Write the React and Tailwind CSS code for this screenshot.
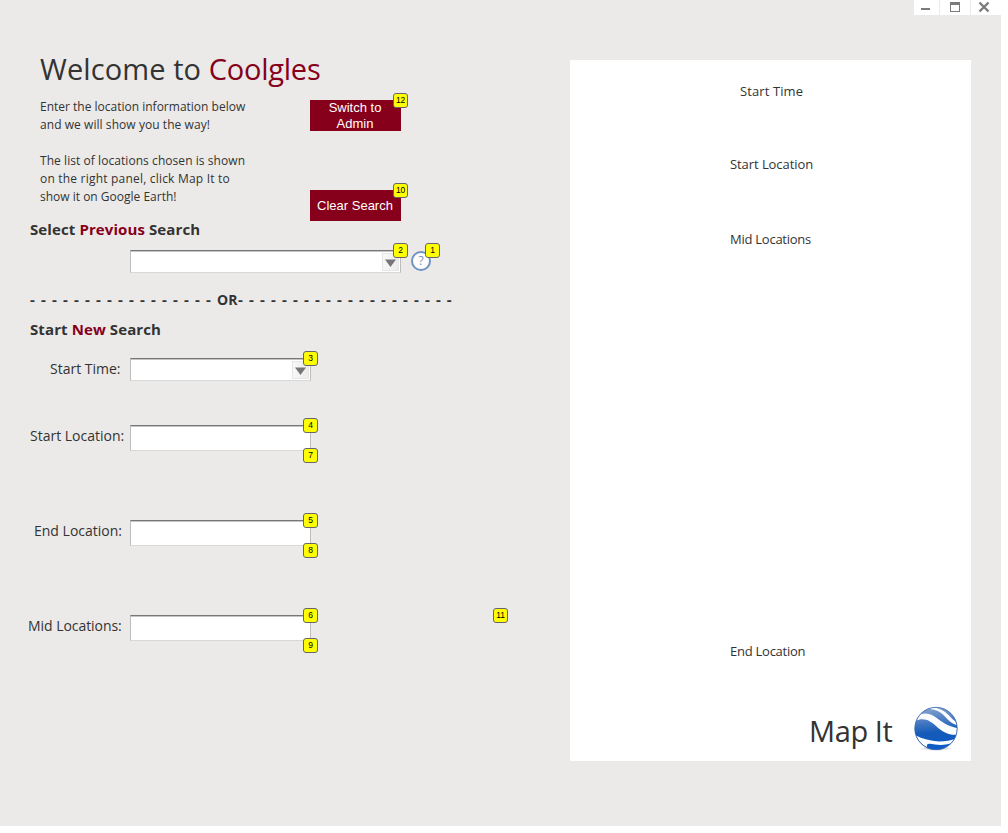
const DASHES_LEFT = Array(17).fill('-').join(' ');
const DASHES_RIGHT = Array(20).fill('-').join(' ');

function Badge({ n, className }) {
  return (
    <span
      className={`absolute z-10 flex h-[15px] w-[15px] items-center justify-center rounded-[3px] border border-[#666] bg-[#ffff00] font-['Liberation_Sans',sans-serif] text-[8.5px] leading-none tracking-[-0.2px] text-black ${className}`}
    >
      {n}
    </span>
  );
}

function Arrow() {
  return (
    <span className="mt-[2px] mr-px flex h-[18px] w-[17px] items-center justify-center border border-[#e6e6e6] bg-linear-to-r from-[#f8f8f8] to-[#ececec]">
      <svg className="mt-px h-[8px] w-[11px]" viewBox="0 0 11 8">
        <path d="M0 0.5h11L5.5 8z" fill="#777" />
      </svg>
    </span>
  );
}

function Field({ select, wide, children }) {
  return (
    <div
      className={`relative flex shrink-0 justify-end border border-[#bdbdbd] border-t-[#777] border-b-[#d8d8d8] bg-white shadow-[inset_0_1px_0_#c4c4c4] ${
        wide ? 'w-[271px]' : 'w-[181px]'
      } ${select ? 'h-[23px]' : 'h-[26px]'}`}
    >
      {select && <Arrow />}
      {children}
    </div>
  );
}

function Label({ className, children }) {
  return <label className={`w-[130px] shrink-0 text-[14px] leading-[22px] whitespace-nowrap ${className}`}>{children}</label>;
}

function Button({ badge, children }) {
  return (
    <button className="relative flex h-[31px] w-[91px] shrink-0 items-center justify-center bg-[#86001b] pr-px font-['Liberation_Sans',sans-serif] text-[13px] leading-4 text-white">
      {children}
      <Badge n={badge} className="-top-[7px] left-[83px]" />
    </button>
  );
}

function Earth() {
  return (
    <svg className="h-[46px] w-[46px]" viewBox="0 0 46 46">
      <defs>
        <linearGradient id="sea" x1="0.3" y1="0" x2="0.4" y2="1">
          <stop offset="0" stopColor="#8aa5cf" />
          <stop offset="0.3" stopColor="#4f7fc4" />
          <stop offset="0.6" stopColor="#155ab8" />
          <stop offset="1" stopColor="#0c5cc8" />
        </linearGradient>
        <radialGradient id="shade">
          <stop offset="0" stopColor="#777" stopOpacity="0.6" />
          <stop offset="1" stopColor="#777" stopOpacity="0" />
        </radialGradient>
        <clipPath id="globe">
          <circle cx="23" cy="23.5" r="21" />
        </clipPath>
      </defs>
      <ellipse cx="23" cy="43.5" rx="17" ry="2.5" fill="url(#shade)" />
      <circle cx="23" cy="23.5" r="21.3" fill="url(#sea)" />
      <g clipPath="url(#globe)" fill="#fbfdff">
        <path d="M4 12C9 6.500 17 8 23 12.500C30 18 36 21.500 46 23.500V29.500C37 31 30 27.500 23 21C17 15.500 11 12 2 16z" />
        <path d="M19 2C26 3 31 5.500 35 9.500C38.500 13 41 16 45 18V20.500C39 19 35.500 15.500 32 11.500C28 7 23 4.500 17 4z" />
        <path d="M1 29.500C9 34 17 36 26 36.500C33 36.500 38 35.500 45 33L41 37.500C33 40.500 25 40.500 17 38.800C14.500 38.500 13.500 39.500 14 42.500C8 39 4 35 1 29.500z" />
      </g>
      <circle cx="23" cy="23.5" r="21.2" fill="none" stroke="#3865ac" strokeWidth="0.8" />
    </svg>
  );
}

function WindowControls() {
  return (
    <div className="flex h-[15px] w-[87px] shrink-0 gap-px self-end">
      <span className="flex w-[25px] bg-white">
        <svg className="h-[15px] w-[25px]" viewBox="0 0 25 15">
          <path d="M7 8h9v2H7z" fill="#7b7b7b" />
        </svg>
      </span>
      <span className="flex w-[30px] bg-white">
        <svg className="h-[15px] w-[30px]" viewBox="0 0 30 15">
          <path d="M10 2h10v10H10zM11 5v6h8V5z" fill="#7b7b7b" fillRule="evenodd" />
        </svg>
      </span>
      <span className="flex w-[30px] bg-white">
        <svg className="h-[15px] w-[30px]" viewBox="0 0 30 15">
          <path d="M8.500 2.500l9 9M17.500 2.500l-9 9" stroke="#7b7b7b" strokeWidth="2.400" />
        </svg>
      </span>
    </div>
  );
}

export default function App() {
  return (
    <div className="min-h-[833px] bg-white font-['Open_Sans',sans-serif] text-[#333]">
      <div className="flex h-[826px] w-[1001px] flex-col bg-[#ebeae8]">
        <WindowControls />
        <div className="flex">
          <main className="flex w-[570px] shrink-0 flex-col pt-[33px]">
            <h1 className="h-[43px] pl-10 text-[29px] leading-[42px] whitespace-nowrap">
              <span className="tracking-[0.1px]">Welcome to </span>
              <span className="tracking-[-0.25px] text-[#86001b]">Coolgles</span>
            </h1>
            <div className="flex h-[129px] pt-[7px] pl-10">
              <div className="w-[270px] text-[12px] leading-[18px] whitespace-nowrap">
                <p>Enter the location information below</p>
                <p className="tracking-[0.06px]">and we will show you the way!</p>
                <p className="mt-[18px] tracking-[0.06px]">The list of locations chosen is shown</p>
                <p className="tracking-[0.2px]">on the right panel, click Map It to</p>
                <p>show it on Google Earth!</p>
              </div>
              <div className="flex flex-col gap-[59px] pt-[2px]">
                <Button badge="12">
                  Switch to
                  <br />
                  Admin
                </Button>
                <Button badge="10">Clear Search</Button>
              </div>
            </div>
            <h2 className="h-[30px] pl-[30px] text-[15px] leading-[18px] font-bold tracking-[0.1px] whitespace-nowrap">
              Select <span className="text-[#86001b]">Previous</span> Search
            </h2>
            <div className="flex h-[39px] gap-[10px] pl-[130px]">
              <Field select wide>
                <Badge n="2" className="-top-[8px] left-[262px]" />
              </Field>
              <span className="relative mt-px flex h-5 w-5 items-center justify-center rounded-full border-2 border-[#6f93c3] bg-white text-[12px] leading-none text-[#6f93c3]">
                ?
                <Badge n="1" className="-top-[10px] left-[12px]" />
              </span>
            </div>
            <div className="flex h-[31px] pl-[30px] text-[15px] leading-[20px] font-bold whitespace-nowrap">
              <span className="w-[187px] [word-spacing:2.27px]">{DASHES_LEFT}</span>
              <span className="w-[21px] text-[14px] leading-[22px]">OR</span>
              <span className="[word-spacing:2.27px]">{DASHES_RIGHT}</span>
            </div>
            <h2 className="h-[38px] pl-[30px] text-[15px] leading-[18px] font-bold tracking-[0.1px] whitespace-nowrap">
              Start <span className="text-[#86001b]">New</span> Search
            </h2>
            <div className="flex h-[67px]">
              <Label className="pl-[50px]">Start Time:</Label>
              <Field select>
                <Badge n="3" className="-top-[8px] left-[172px]" />
              </Field>
            </div>
            <div className="flex h-[95px]">
              <Label className="pl-[30px]">Start Location:</Label>
              <Field>
                <Badge n="4" className="-top-[8px] left-[172px]" />
                <Badge n="7" className="top-[22px] left-[172px]" />
              </Field>
            </div>
            <div className="flex h-[95px]">
              <Label className="pl-[34px]">End Location:</Label>
              <Field>
                <Badge n="5" className="-top-[8px] left-[172px]" />
                <Badge n="8" className="top-[22px] left-[172px]" />
              </Field>
            </div>
            <div className="flex h-[95px]">
              <Label className="pl-[28px] tracking-[-0.05px]">Mid Locations:</Label>
              <Field>
                <Badge n="6" className="-top-[8px] left-[172px]" />
                <Badge n="9" className="top-[22px] left-[172px]" />
                <Badge n="11" className="-top-[8px] left-[362px]" />
              </Field>
            </div>
          </main>
          <aside className="mt-[45px] flex h-[701px] w-[401px] flex-col bg-white pt-[22px] pl-[160px] text-[13px] leading-[18px] whitespace-nowrap">
            <p className="h-[73px] pl-[10px] tracking-[0.1px]">Start Time</p>
            <p className="h-[75px] tracking-[-0.07px]">Start Location</p>
            <p className="h-[412px] tracking-[-0.25px]">Mid Locations</p>
            <p className="h-[63px] tracking-[-0.25px]">End Location</p>
            <div className="flex pl-[79px]">
              <span className="w-[104px] pt-[5px] text-[29px] leading-[42px] tracking-[-0.4px]">Map It</span>
              <Earth />
            </div>
          </aside>
        </div>
      </div>
    </div>
  );
}
